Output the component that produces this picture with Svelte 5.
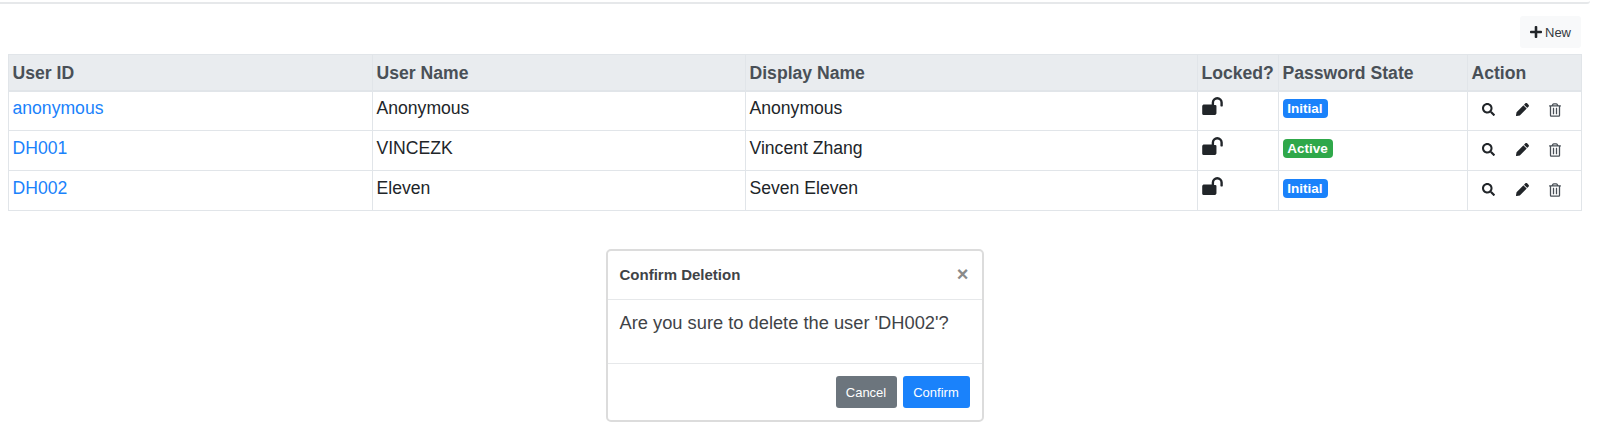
<script>
  const users = [
    { id: 'anonymous', name: 'Anonymous', display: 'Anonymous', state: 'Initial' },
    { id: 'DH001', name: 'VINCEZK', display: 'Vincent Zhang', state: 'Active' },
    { id: 'DH002', name: 'Eleven', display: 'Seven Eleven', state: 'Initial' }
  ];
</script>

<div class="topbar"></div>
<main class="page">
  <div class="toolbar">
    <button class="new">
      <svg class="plus" viewBox="0 0 448 512"><path d="M416 208H272V64c0-17.67-14.33-32-32-32h-32c-17.67 0-32 14.33-32 32v144H32c-17.67 0-32 14.33-32 32v32c0 17.67 14.33 32 32 32h144v144c0 17.67 14.33 32 32 32h32c17.67 0 32-14.33 32-32V304h144c17.67 0 32-14.33 32-32v-32c0-17.67-14.33-32-32-32z"/></svg>
      New
    </button>
  </div>

  <table>
    <colgroup>
      <col class="c1" /><col class="c2" /><col class="c3" /><col class="c4" /><col class="c5" /><col class="c6" />
    </colgroup>
    <thead>
      <tr>
        <th>User ID</th><th>User Name</th><th>Display Name</th><th>Locked?</th><th>Password State</th><th>Action</th>
      </tr>
    </thead>
    <tbody>
      {#each users as u}
        <tr>
          <td><a href="#{u.id}">{u.id}</a></td>
          <td>{u.name}</td>
          <td>{u.display}</td>
          <td>
            <svg class="lock" viewBox="0 128 1664 1536"><path d="M1664 576v256q0 26-19 45t-45 19h-64q-26 0-45-19t-19-45V576q0-106-75-181t-181-75-181 75-75 181v192h96q40 0 68 28t28 68v576q0 40-28 68t-68 68H96q-40 0-68-28t-28-68V864q0-40 28-68t68-68h672V576q0-185 131.5-316.5T1216 128t316.5 131.5T1664 576z"/></svg>
          </td>
          <td><span class="badge" class:active={u.state === 'Active'}>{u.state}</span></td>
          <td>
            <div class="actions">
              <button class="icon" aria-label="View">
                <svg class="i13" viewBox="0 0 512 512"><path d="M505 442.7L405.3 343c-4.5-4.5-10.6-7-17-7H372c27.6-35.3 44-79.7 44-128C416 93.1 322.9 0 208 0S0 93.1 0 208s93.1 208 208 208c48.3 0 92.7-16.4 128-44v16.3c0 6.4 2.5 12.5 7 17l99.7 99.7c9.4 9.4 24.6 9.4 33.9 0l28.3-28.3c9.4-9.4 9.4-24.6.1-34zM208 336c-70.7 0-128-57.2-128-128 0-70.7 57.2-128 128-128 70.7 0 128 57.2 128 128 0 70.7-57.2 128-128 128z"/></svg>
              </button>
              <button class="icon" aria-label="Edit">
                <svg class="i13" viewBox="0 0 512 512"><path d="M497.9 142.1l-46.1 46.1c-4.7 4.7-12.3 4.7-17 0l-111-111c-4.7-4.7-4.7-12.3 0-17l46.1-46.1c18.7-18.7 49.1-18.7 67.9 0l60.1 60.1c18.8 18.7 18.8 49.1 0 67.9zM284.2 99.8L21.6 362.4.4 483.9c-2.9 16.4 11.4 30.6 27.8 27.8l121.5-21.3 262.6-262.6c4.7-4.7 4.7-12.3 0-17l-111-111c-4.8-4.7-12.4-4.7-17.1 0z"/></svg>
              </button>
              <button class="icon narrow" aria-label="Delete">
                <svg class="trash" viewBox="0 0 448 512"><path d="M268 416h24a12 12 0 0 0 12-12V188a12 12 0 0 0-12-12h-24a12 12 0 0 0-12 12v216a12 12 0 0 0 12 12zM432 80h-82.41l-34-56.7A48 48 0 0 0 274.41 0H173.59a48 48 0 0 0-41.16 23.3L98.41 80H16A16 16 0 0 0 0 96v16a16 16 0 0 0 16 16h16v336a48 48 0 0 0 48 48h288a48 48 0 0 0 48-48V128h16a16 16 0 0 0 16-16V96a16 16 0 0 0-16-16zM171.84 50.91A6 6 0 0 1 177 48h94a6 6 0 0 1 5.15 2.91L293.61 80H154.39zM368 464H80V128h288zm-212-48h24a12 12 0 0 0 12-12V188a12 12 0 0 0-12-12h-24a12 12 0 0 0-12 12v216a12 12 0 0 0 12 12z"/></svg>
              </button>
            </div>
          </td>
        </tr>
      {/each}
    </tbody>
  </table>

  <section class="dialog">
    <header>
      <h5>Confirm Deletion</h5>
      <span class="close">×</span>
    </header>
    <div class="body">Are you sure to delete the user 'DH002'?</div>
    <footer>
      <button class="btn cancel">Cancel</button>
      <button class="btn confirm">Confirm</button>
    </footer>
  </section>
</main>

<style>
  :global(body) {
    margin: 0;
    background: #fff;
    color: #212529;
    font-family: "Liberation Sans", Arial, sans-serif;
  }
  .topbar {
    height: 2px;
    width: 1590px;
    border-bottom: 2px solid #e6e8ea;
    border-bottom-right-radius: 3px;
    box-sizing: content-box;
  }
  .page {
    width: 1573px;
    margin-left: 8px;
  }
  .toolbar {
    display: flex;
    justify-content: flex-end;
    padding-top: 12px;
    height: 38px;
  }
  .new {
    display: flex;
    align-items: center;
    gap: 3px;
    width: 61px;
    height: 32px;
    padding: 0 0 0 10px;
    border: 0;
    border-radius: 3px;
    background: #f8f9fa;
    color: #343a40;
    font: 13px "Liberation Sans", Arial, sans-serif;
  }
  .plus {
    width: 12px;
    height: 14px;
    fill: #212529;
  }
  table {
    width: 1573px;
    table-layout: fixed;
    border-collapse: collapse;
    font-size: 17.6px;
  }
  .c1 { width: 364px; }
  .c2 { width: 373px; }
  .c3 { width: 452px; }
  .c4 { width: 81px; }
  .c5 { width: 189px; }
  .c6 { width: 114px; }
  th, td {
    border: 1px solid #e1e5e9;
    padding: 0 3.5px;
    text-align: left;
    vertical-align: top;
    line-height: 26px;
  }
  th {
    height: 36px;
    padding-top: 5px;
    box-sizing: border-box;
    background: #e9ecef;
    color: #495057;
    font-weight: 700;
    border-bottom-width: 2px;
    white-space: nowrap;
  }
  td {
    height: 40px;
    padding-top: 4px;
    box-sizing: border-box;
  }
  tbody tr:first-child td {
    padding-top: 3px;
  }
  a {
    color: #1a82fb;
    text-decoration: none;
  }
  .lock {
    display: block;
    width: 21px;
    height: 19px;
    margin-top: 2px;
    fill: #212529;
  }
  .badge {
    display: inline-block;
    width: 45px;
    height: 19px;
    margin-top: 4px;
    border-radius: 4px;
    background: #1a82fb;
    color: #fff;
    font-size: 13.5px;
    font-weight: 700;
    line-height: 19px;
    text-align: center;
    vertical-align: top;
  }
  .badge.active {
    width: 50px;
    background: #2fa84a;
  }
  .actions {
    display: flex;
    margin-top: 8px;
  }
  .icon {
    display: flex;
    justify-content: center;
    width: 34px;
    height: 14px;
    padding: 0;
    border: 0;
    background: none;
  }
  .icon.narrow {
    width: 30px;
  }
  .i13 {
    width: 13px;
    height: 13px;
    fill: #212529;
  }
  .trash {
    width: 12px;
    height: 14px;
    fill: #495057;
  }
  .dialog {
    box-sizing: border-box;
    width: 378px;
    height: 173px;
    margin: 38px auto 0;
    border: 2px solid #dcdcdc;
    border-radius: 5px;
    display: flex;
    flex-direction: column;
  }
  header {
    display: flex;
    align-items: center;
    justify-content: space-between;
    height: 49px;
    flex: none;
    padding: 0 12px 2px;
    box-sizing: border-box;
    border-bottom: 1px solid #e6e8ea;
  }
  h5 {
    margin: 0;
    font-size: 15px;
    font-weight: 700;
    color: #3f4347;
  }
  .close {
    color: #8a8a8a;
    font-size: 20px;
    font-weight: 700;
    margin-right: 1px;
  }
  .body {
    height: 64px;
    flex: none;
    box-sizing: border-box;
    padding: 11px 12px 0;
    border-bottom: 1px solid #e6e8ea;
    font-size: 18.3px;
    line-height: 24px;
    color: #3f4347;
  }
  footer {
    display: flex;
    justify-content: flex-end;
    gap: 6px;
    padding: 12px 12px 0 0;
  }
  .btn {
    height: 32px;
    padding: 0;
    border: 0;
    border-radius: 3px;
    color: #fff;
    font: 13px "Liberation Sans", Arial, sans-serif;
  }
  .cancel { width: 61px; background: #6c757d; }
  .confirm { width: 67px; background: #1a82fb; }
</style>
